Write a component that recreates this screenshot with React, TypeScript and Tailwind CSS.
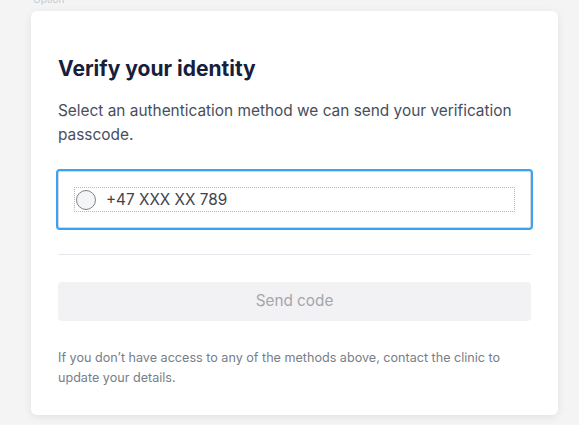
export default function App() {
  return (
    <div
      className="min-h-screen overflow-hidden bg-[#f4f4f5] pl-[31px]"
      style={{ fontFamily: 'Inter, "Noto Sans", sans-serif' }}
    >
      <div className="-mt-[7px] h-[18px] pl-[2px] text-[10px] leading-[12px] text-[#c9c9cc]">Option</div>
      <div className="w-[527px] rounded-md bg-white px-[27px] pt-[44px] pb-[27px] shadow-[0_2px_8px_rgba(0,0,0,0.08)]">
        <h1 className="text-[21px] font-bold leading-[28px] text-[#16203b]">Verify your identity</h1>
        <p className="mt-4 text-[15.4px] leading-[24px] text-[#474e5c]">
          Select an authentication method we can send your verification passcode.
        </p>

        <div className="mt-6 rounded-[2px] border border-[#d5d9de] p-4 outline-2 outline-[#36a3f4]">
          <label className="flex h-[23px] items-center gap-[10px] outline-1 outline-dotted outline-[#8ec5ef]">
            <span className="ml-px h-[20px] w-[20px] shrink-0 rounded-full border-[1.5px] border-[#7d848c] bg-[#f4f5f6]" />
            <span className="text-[15.3px] leading-[23px] text-[#3f444c]">+47 XXX XX 789</span>
          </label>
        </div>

        <div className="mt-[26px] border-t border-[#e3e7eb]" />

        <button
          type="button"
          disabled
          className="mt-[27px] flex h-[39px] w-full items-center justify-center rounded bg-[#f2f2f4] text-[15.3px] text-[#a3a6ab]"
        >
          Send code
        </button>

        <p className="mt-[27px] text-[12.6px] leading-5 text-[#787e88]">
          If you don’t have access to any of the methods above, contact the clinic to update your details.
        </p>
      </div>
    </div>
  )
}
